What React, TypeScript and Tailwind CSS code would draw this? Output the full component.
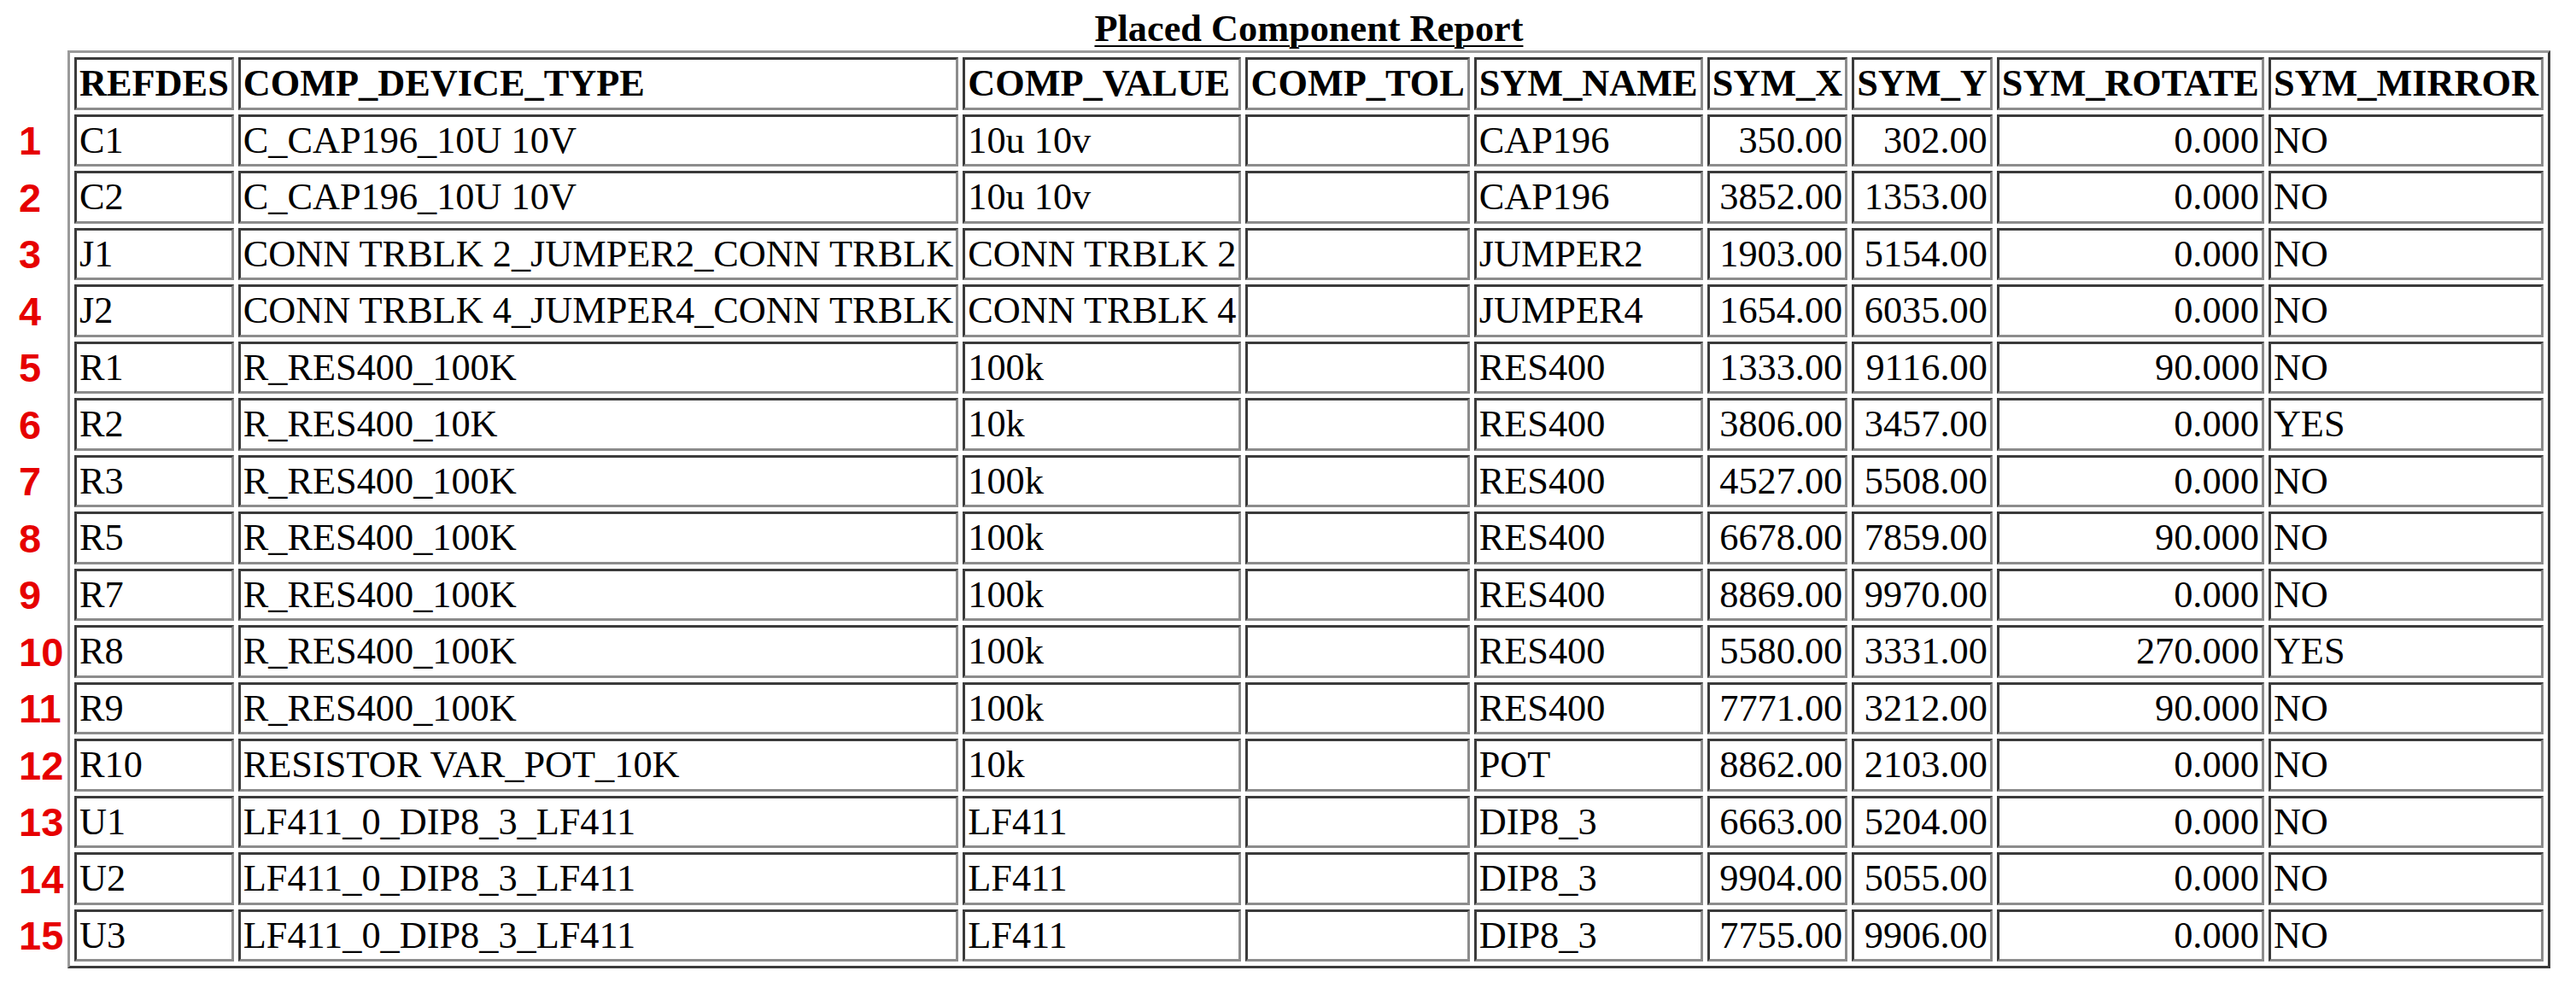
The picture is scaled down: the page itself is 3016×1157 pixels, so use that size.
import type { ReactNode } from 'react';

type Row = {
  refdes: string;
  device: string;
  value: string;
  tol: string;
  sym: string;
  x: string;
  y: string;
  rotate: string;
  mirror: string;
};

const rows: Row[] = [
  { refdes: 'C1', device: 'C_CAP196_10U 10V', value: '10u 10v', tol: '', sym: 'CAP196', x: '350.00', y: '302.00', rotate: '0.000', mirror: 'NO' },
  { refdes: 'C2', device: 'C_CAP196_10U 10V', value: '10u 10v', tol: '', sym: 'CAP196', x: '3852.00', y: '1353.00', rotate: '0.000', mirror: 'NO' },
  { refdes: 'J1', device: 'CONN TRBLK 2_JUMPER2_CONN TRBLK', value: 'CONN TRBLK 2', tol: '', sym: 'JUMPER2', x: '1903.00', y: '5154.00', rotate: '0.000', mirror: 'NO' },
  { refdes: 'J2', device: 'CONN TRBLK 4_JUMPER4_CONN TRBLK', value: 'CONN TRBLK 4', tol: '', sym: 'JUMPER4', x: '1654.00', y: '6035.00', rotate: '0.000', mirror: 'NO' },
  { refdes: 'R1', device: 'R_RES400_100K', value: '100k', tol: '', sym: 'RES400', x: '1333.00', y: '9116.00', rotate: '90.000', mirror: 'NO' },
  { refdes: 'R2', device: 'R_RES400_10K', value: '10k', tol: '', sym: 'RES400', x: '3806.00', y: '3457.00', rotate: '0.000', mirror: 'YES' },
  { refdes: 'R3', device: 'R_RES400_100K', value: '100k', tol: '', sym: 'RES400', x: '4527.00', y: '5508.00', rotate: '0.000', mirror: 'NO' },
  { refdes: 'R5', device: 'R_RES400_100K', value: '100k', tol: '', sym: 'RES400', x: '6678.00', y: '7859.00', rotate: '90.000', mirror: 'NO' },
  { refdes: 'R7', device: 'R_RES400_100K', value: '100k', tol: '', sym: 'RES400', x: '8869.00', y: '9970.00', rotate: '0.000', mirror: 'NO' },
  { refdes: 'R8', device: 'R_RES400_100K', value: '100k', tol: '', sym: 'RES400', x: '5580.00', y: '3331.00', rotate: '270.000', mirror: 'YES' },
  { refdes: 'R9', device: 'R_RES400_100K', value: '100k', tol: '', sym: 'RES400', x: '7771.00', y: '3212.00', rotate: '90.000', mirror: 'NO' },
  { refdes: 'R10', device: 'RESISTOR VAR_POT_10K', value: '10k', tol: '', sym: 'POT', x: '8862.00', y: '2103.00', rotate: '0.000', mirror: 'NO' },
  { refdes: 'U1', device: 'LF411_0_DIP8_3_LF411', value: 'LF411', tol: '', sym: 'DIP8_3', x: '6663.00', y: '5204.00', rotate: '0.000', mirror: 'NO' },
  { refdes: 'U2', device: 'LF411_0_DIP8_3_LF411', value: 'LF411', tol: '', sym: 'DIP8_3', x: '9904.00', y: '5055.00', rotate: '0.000', mirror: 'NO' },
  { refdes: 'U3', device: 'LF411_0_DIP8_3_LF411', value: 'LF411', tol: '', sym: 'DIP8_3', x: '7755.00', y: '9906.00', rotate: '0.000', mirror: 'NO' },
];

const headers = [
  'REFDES',
  'COMP_DEVICE_TYPE',
  'COMP_VALUE',
  'COMP_TOL',
  'SYM_NAME',
  'SYM_X',
  'SYM_Y',
  'SYM_ROTATE',
  'SYM_MIRROR',
];

// inset cell border like an old border=1 html table
const cellBase =
  'border-[3px] border-solid border-[#8c8c8c] border-t-[#3a3a3a] border-l-[#3a3a3a] px-[3px] py-0 leading-[55.5px] align-middle whitespace-nowrap';

function Cell({ children, right = false }: { children?: ReactNode; right?: boolean }) {
  return <td className={`${cellBase} ${right ? 'text-right' : 'text-left'}`}>{children}</td>;
}

export default function App() {
  return (
    <div className="h-[1157px] w-[3016px] overflow-hidden bg-white pl-[79px] pt-[8px] font-['Liberation_Serif',serif] text-[44.3px] text-black">
      <div className="w-fit">
        <div className="text-center font-bold leading-[51px] underline decoration-2 underline-offset-[5px]">
          Placed Component Report
        </div>
        <table className="border-separate border-spacing-[5.5px] border-[3px] border-solid border-[#3a3a3a] border-t-[#9a9a9a] border-l-[#9a9a9a]">
          <thead>
            <tr>
              {headers.map((header) => (
                <th key={header} className={`${cellBase} text-left font-bold`}>
                  {header}
                </th>
              ))}
            </tr>
          </thead>
          <tbody>
            {rows.map((row, index) => (
              <tr key={row.refdes}>
                <td className={`${cellBase} relative text-left`}>
                  <span className="absolute left-[-68px] top-1/2 -translate-y-1/2 font-['Liberation_Sans',Arial,sans-serif] text-[47px] font-bold leading-none text-[#e60000]">
                    {index + 1}
                  </span>
                  {row.refdes}
                </td>
                <Cell>{row.device}</Cell>
                <Cell>{row.value}</Cell>
                <Cell>{row.tol}</Cell>
                <Cell>{row.sym}</Cell>
                <Cell right>{row.x}</Cell>
                <Cell right>{row.y}</Cell>
                <Cell right>{row.rotate}</Cell>
                <Cell>{row.mirror}</Cell>
              </tr>
            ))}
          </tbody>
        </table>
      </div>
    </div>
  );
}
